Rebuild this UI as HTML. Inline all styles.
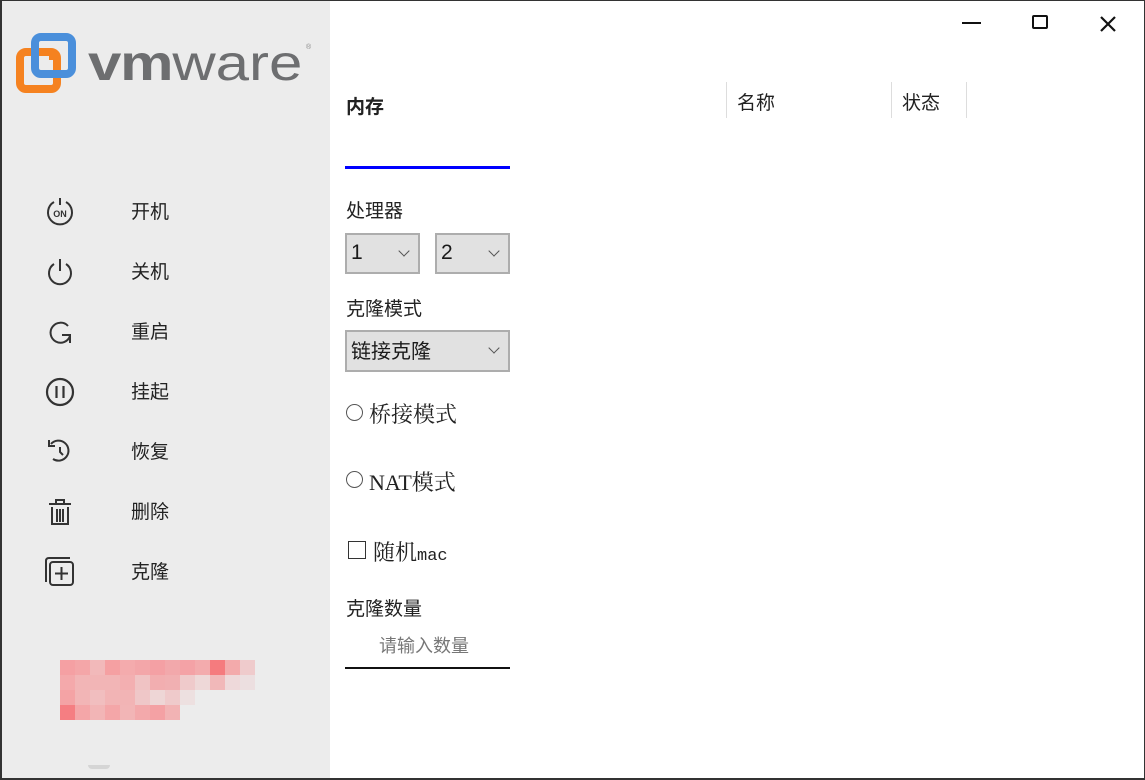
<!DOCTYPE html>
<html><head><meta charset="utf-8"><style>
*{margin:0;padding:0;box-sizing:border-box}
html,body{width:1145px;height:780px;overflow:hidden;background:#fff}
body{position:relative;font-family:"Liberation Sans","Noto Sans CJK SC",sans-serif;color:#1a1a1a}
.frame{position:absolute;inset:0;border:1px solid #333;border-left:2px solid #333;border-bottom:2px solid #333}
.left{position:absolute;left:2px;top:1px;width:328px;height:777px;background:#ececec}
.abs{position:absolute}
.menu{position:absolute;left:131px;font-size:19px;color:#222}
.ic{position:absolute;left:44px}
.lbl{position:absolute;font-size:19px;color:#222}
.sel{position:absolute;background:#e1e1e1;border:2px solid #adadad;font-size:21px;padding-left:4px;line-height:36px}
.sel i{position:absolute;right:10px;top:12px;width:8px;height:8px;border-right:1.5px solid #555;border-bottom:1.5px solid #555;transform:rotate(45deg)}
.cell{position:absolute;width:15px;height:15px}
</style></head><body>
<div class="left"></div>
<svg class="abs" style="left:0;top:0" width="80" height="100">
<rect x="20" y="52" width="37" height="37" rx="6" fill="none" stroke="#f58220" stroke-width="8"/>
<rect x="35" y="37" width="37" height="37" rx="6" fill="none" stroke="#4a8fdb" stroke-width="8"/>
<path d="M53 52 L53 60" stroke="#f58220" stroke-width="8"/>
</svg>
<div class="abs" style="left:88px;top:38px;font-size:50px;line-height:50px;color:#6d6e70;transform:scaleX(1.2);transform-origin:left;white-space:nowrap"><b style="letter-spacing:-1px">vm</b>ware</div>
<div class="abs" style="left:306px;top:44px;font-size:7px;color:#888">®</div>

<svg class="ic" style="top:196px" width="32" height="32" viewBox="0 0 32 32" fill="none" stroke="#333" stroke-width="2"><path d="M10 6 A12 12 0 1 0 22 6"/><path d="M16 2 V9"/><text x="16" y="21" font-size="9" font-weight="bold" text-anchor="middle" fill="#333" stroke="none" font-family="Liberation Sans">ON</text></svg>
<div class="menu" style="top:197px">开机</div>
<svg class="ic" style="top:256px" width="32" height="32" viewBox="0 0 32 32" fill="none" stroke="#333" stroke-width="2"><path d="M10 8 A11 11 0 1 0 22 8"/><path d="M16 3 V15"/></svg>
<div class="menu" style="top:257px">关机</div>
<svg class="ic" style="top:316px" width="32" height="32" viewBox="0 0 32 32" fill="none" stroke="#333" stroke-width="2"><path d="M24 10 A10 10 0 1 0 26 20"/><path d="M18 19 H26 V27"/></svg>
<div class="menu" style="top:317px">重启</div>
<svg class="ic" style="top:376px" width="32" height="32" viewBox="0 0 32 32" fill="none" stroke="#333" stroke-width="2.2"><circle cx="16" cy="16" r="13"/><path d="M12.5 10V22M19.5 10V22"/></svg>
<div class="menu" style="top:377px">挂起</div>
<svg class="ic" style="top:436px" width="32" height="32" viewBox="0 0 32 32" fill="none" stroke="#333" stroke-width="2"><path d="M7 8 A10 10 0 1 1 9 23"/><path d="M5 4 V10 H11"/><path d="M16 11 V16 L19 19"/></svg>
<div class="menu" style="top:437px">恢复</div>
<svg class="ic" style="top:496px" width="32" height="32" viewBox="0 0 32 32" fill="none" stroke="#333" stroke-width="2"><path d="M5 8 H27M12 8 V4 H20 V8"/><path d="M8 11 V28 H24 V11"/><path d="M13 13 V26M16 13V26M19 13V26"/></svg>
<div class="menu" style="top:497px">删除</div>
<svg class="ic" style="top:556px" width="32" height="32" viewBox="0 0 32 32" fill="none" stroke="#333" stroke-width="2"><path d="M2 26 V5 Q2 2 5 2 H26"/><rect x="6" y="6" width="23" height="23" rx="3"/><path d="M17.5 11 V24M11 17.5 H24"/></svg>
<div class="menu" style="top:557px">克隆</div>

<div id="pix"></div>
<div class="abs" style="left:88px;top:765px;width:22px;height:4px;background:#d5d5d5;border-radius:0 0 6px 6px"></div>

<div class="lbl" style="left:346px;top:92px;font-weight:bold">内存</div>
<div class="abs" style="left:345px;top:166px;width:165px;height:3px;background:#0000ff"></div>
<div class="lbl" style="left:346px;top:196px">处理器</div>
<div class="sel" style="left:345px;top:233px;width:75px;height:41px">1<i></i></div>
<div class="sel" style="left:435px;top:233px;width:75px;height:41px">2<i></i></div>
<div class="lbl" style="left:346px;top:294px">克隆模式</div>
<div class="sel" style="left:345px;top:330px;width:165px;height:42px;font-size:20px;line-height:40px">链接克隆<i></i></div>
<div class="abs" style="left:346px;top:404px;width:17px;height:17px;border:1.5px solid #555;border-radius:50%"></div>
<div class="lbl" style="left:369px;top:398px;font-size:22px;font-family:'Liberation Serif','Noto Serif CJK SC',serif">桥接模式</div>
<div class="abs" style="left:346px;top:471px;width:17px;height:17px;border:1.5px solid #555;border-radius:50%"></div>
<div class="lbl" style="left:369px;top:466px;font-size:22px;font-family:'Liberation Serif','Noto Serif CJK SC',serif">NAT<span style="font-family:'Noto Serif CJK SC',serif">模式</span></div>
<div class="abs" style="left:348px;top:541px;width:18px;height:18px;border:1.5px solid #333"></div>
<div class="lbl" style="left:373px;top:536px;font-size:22px;font-family:'Noto Serif CJK SC',serif">随机<span style="font-family:'Liberation Mono',monospace;font-size:17px">mac</span></div>
<div class="lbl" style="left:346px;top:594px">克隆数量</div>
<div class="lbl" style="left:379px;top:632px;color:#777;font-size:18px">请输入数量</div>
<div class="abs" style="left:345px;top:667px;width:165px;height:2px;background:#111"></div>

<div class="abs" style="left:726px;top:82px;width:1px;height:36px;background:#ddd"></div>
<div class="abs" style="left:891px;top:82px;width:1px;height:36px;background:#ddd"></div>
<div class="abs" style="left:966px;top:82px;width:1px;height:36px;background:#ddd"></div>
<div class="lbl" style="left:737px;top:88px">名称</div>
<div class="lbl" style="left:902px;top:88px">状态</div>

<div class="abs" style="left:962px;top:22px;width:19px;height:2px;background:#111"></div>
<div class="abs" style="left:1032px;top:15px;width:16px;height:14px;border:2px solid #111;border-radius:2px"></div>
<svg class="abs" style="left:1099px;top:15px" width="18" height="18"><path d="M2 2L16 16M16 2L2 16" stroke="#111" stroke-width="2.2"/></svg>
<div class="frame"></div>
<script>
var rows=[["#f5a0a3","#f4a6a8","#f2b9ba","#f5a0a2","#f4abad","#f3a6a9","#f4a0a4","#f2a8ab","#f4a2a6","#f3abad","#f57b7e","#f3aaab","#efcbcc"],
["#f4a9ab","#f2b5b6","#f2b5b6","#f2b5b6","#f3afb1","#f0c3c4","#f2aeb0","#f1b0b2","#efcacb","#eed8d8","#f1b8b9","#eed9da","#ecdfe0"],
["#f4a3a5","#f2b5b6","#f1bebf","#f2b4b5","#f2b4b5","#efc7c8","#eed6d6","#efcacb","#ede0e0"],
["#f57e82","#f4a6a8","#f2b5b6","#f4a6a8","#f2b5b6","#f3a9ab","#f4a1a4","#f2b3b4"]];
var h="";rows.forEach(function(r,i){r.forEach(function(c,j){h+='<div class="cell" style="left:'+(60+j*15)+'px;top:'+(660+i*15)+'px;background:'+c+'"></div>'})});
document.getElementById("pix").innerHTML=h;
</script>
</body></html>
